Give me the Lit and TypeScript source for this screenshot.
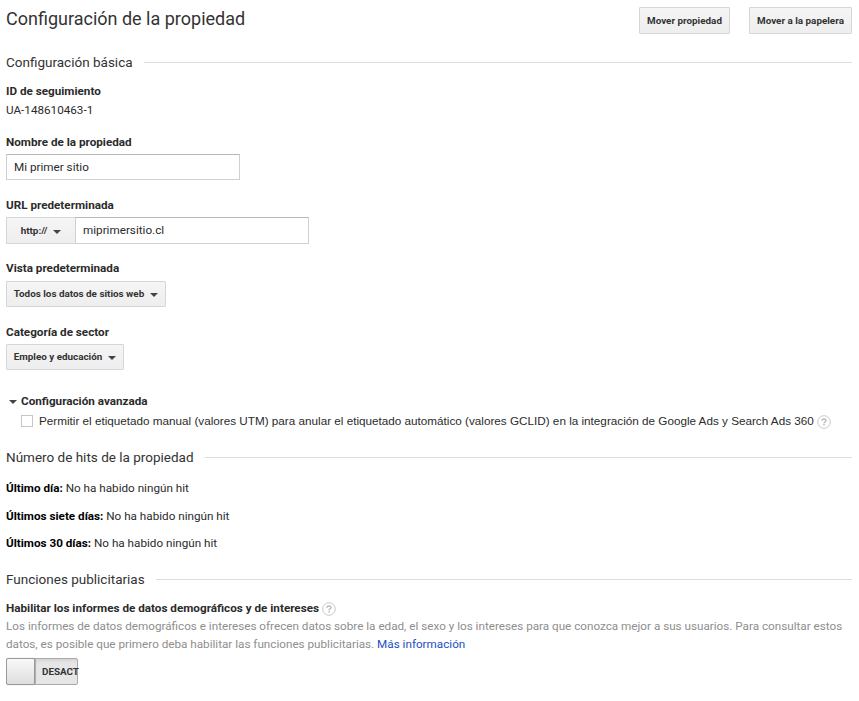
import { LitElement, html, css } from "lit";
import { customElement } from "lit/decorators.js";

@customElement("app-root")
export class AppRoot extends LitElement {
  static styles = css`
    :host { display: block; box-sizing: border-box; height: 701px; padding: 0 7px 0 6px; background: #fff; color: #2b2b2b; font: 11.7px/18px Roboto, sans-serif; overflow: hidden; }
    * { box-sizing: border-box; }
    .top { display: flex; height: 52px; padding-top: 7px; justify-content: space-between; }
    h1 { margin: 0; font-size: 18px; line-height: 24px; font-weight: 400; color: #333; }
    .actions { display: flex; gap: 19px; }
    .btn { display: flex; align-items: center; justify-content: center; gap: 6px; height: 27px; border: 1px solid #d6d6d6; border-radius: 1px; background: linear-gradient(#f5f5f5, #eee); color: #333; font: bold 9.87px Roboto, sans-serif; white-space: nowrap; }
    .move { width: 91px; }
    .trash { width: 103px; }
    h2 { display: flex; align-items: center; gap: 11px; margin: 0; font-size: 13.5px; line-height: 20px; font-weight: 400; color: #333; }
    h2::after { content: ""; flex: 1; height: 1px; background: #ddd; }
    .label { font-weight: bold; white-space: nowrap; }
    .id { height: 51px; padding-top: 10px; margin-bottom: 10px; line-height: 19px; }
    .field { height: 63px; }
    .field .label { height: 21px; }
    input { display: block; width: 234px; height: 26px; border: 1px solid #d0d0d0; border-top-color: #b8b8b8; padding: 0 7px; color: #2b2b2b; font: 11.7px Roboto, sans-serif; }
    .row { display: flex; }
    .row input { height: 27px; padding-bottom: 2px; }
    .protocol { width: 69px; border-right: 0; }
    .field .wide { height: 22px; }
    .view { width: 160px; height: 26px; padding-bottom: 1px; }
    .sector-field { height: 68px; padding-top: 1px; }
    .sector { width: 118px; height: 26px; padding-bottom: 1px; }
    .arrow { width: 0; height: 0; border: 4px solid transparent; border-top-color: #444; border-bottom: 0; margin-top: 2px; }
    .advanced { display: flex; align-items: center; height: 18px; gap: 4px; padding-left: 3px; margin-top: 2px; }
    .option { display: flex; align-items: center; height: 22px; margin-bottom: 15px; padding-left: 15px; font-family: "Liberation Sans", sans-serif; font-size: 11.71px; white-space: nowrap; }
    .check { width: 12px; height: 12px; border: 1px solid #c6c6c6; margin-right: 6px; }
    .help { width: 14px; height: 14px; margin: 2px 0 0 3px; }
    .hits { padding-top: 12px; height: 102px; }
    .hit { height: 27.5px; }
    .hit b { color: #000; }
    .ads { padding-top: 10px; }
    .ads .title { display: flex; align-items: center; }
    .desc { color: #8e8e8e; white-space: nowrap; }
    .desc span { color: #1a4fc4; }
    .toggle { display: flex; width: 72px; height: 27px; margin-top: 5px; border: 1px solid #aaa; border-radius: 2px; background: linear-gradient(#d5d5d5, #e6e6e6 4px); color: #333; font: bold 9.87px/25px Roboto, sans-serif; white-space: nowrap; }
    .knob { width: 29px; height: 27px; flex: none; background: linear-gradient(#f9f9f9, #dedede); border: 1px solid #999; border-radius: 2px; margin: -1px 7px 0 -1px; box-shadow: 1px 0 1px #aaa; }
  `;
  help() {
    return html`<svg class="help" viewBox="0 0 14 14" fill="none"><circle cx="7" cy="7" r="6.3" stroke="#c8c8c8"/><path d="M5 5.7Q5 4 7 4T9 5.4Q9 6.2 8 6.8T7 8.2M7 9.1V10.4" stroke="#bbb" stroke-width="1.4"/></svg>`;
  }
  render() {
    return html`
      <header class="top"><h1>Configuración de la propiedad</h1><div class="actions"><div class="btn move">Mover propiedad</div><div class="btn trash">Mover a la papelera</div></div></header>
      <h2>Configuración básica</h2>
      <div class="id"><div class="label">ID de seguimiento</div>UA-148610463-1</div>
      <div class="field"><div class="label">Nombre de la propiedad</div><input .value=${"Mi primer sitio"}></div>
      <div class="field"><div class="label">URL predeterminada</div><div class="row"><div class="btn protocol">http://<i class="arrow"></i></div><input .value=${"miprimersitio.cl"}></div></div>
      <div class="field"><div class="label wide">Vista predeterminada</div><div class="btn view">Todos los datos de sitios web<i class="arrow"></i></div></div>
      <div class="field sector-field"><div class="label">Categoría de sector</div><div class="btn sector">Empleo y educación<i class="arrow"></i></div></div>
      <div class="advanced label"><i class="arrow"></i>Configuración avanzada</div>
      <div class="option"><i class="check"></i>Permitir el etiquetado manual (valores UTM) para anular el etiquetado automático (valores GCLID) en la integración de Google Ads y Search Ads 360${this.help()}</div>
      <h2>Número de hits de la propiedad</h2>
      <div class="hits"><div class="hit"><b>Último día:</b> No ha habido ningún hit</div><div class="hit"><b>Últimos siete días:</b> No ha habido ningún hit</div><div class="hit"><b>Últimos 30 días:</b> No ha habido ningún hit</div></div>
      <h2>Funciones publicitarias</h2>
      <div class="ads"><div class="title label">Habilitar los informes de datos demográficos y de intereses${this.help()}</div><div class="desc">Los informes de datos demográficos e intereses ofrecen datos sobre la edad, el sexo y los intereses para que conozca mejor a sus usuarios. Para consultar estos<br>datos, es posible que primero deba habilitar las funciones publicitarias. <span>Más información</span></div><div class="toggle"><i class="knob"></i>DESACT</div></div>
    `;
  }
}
